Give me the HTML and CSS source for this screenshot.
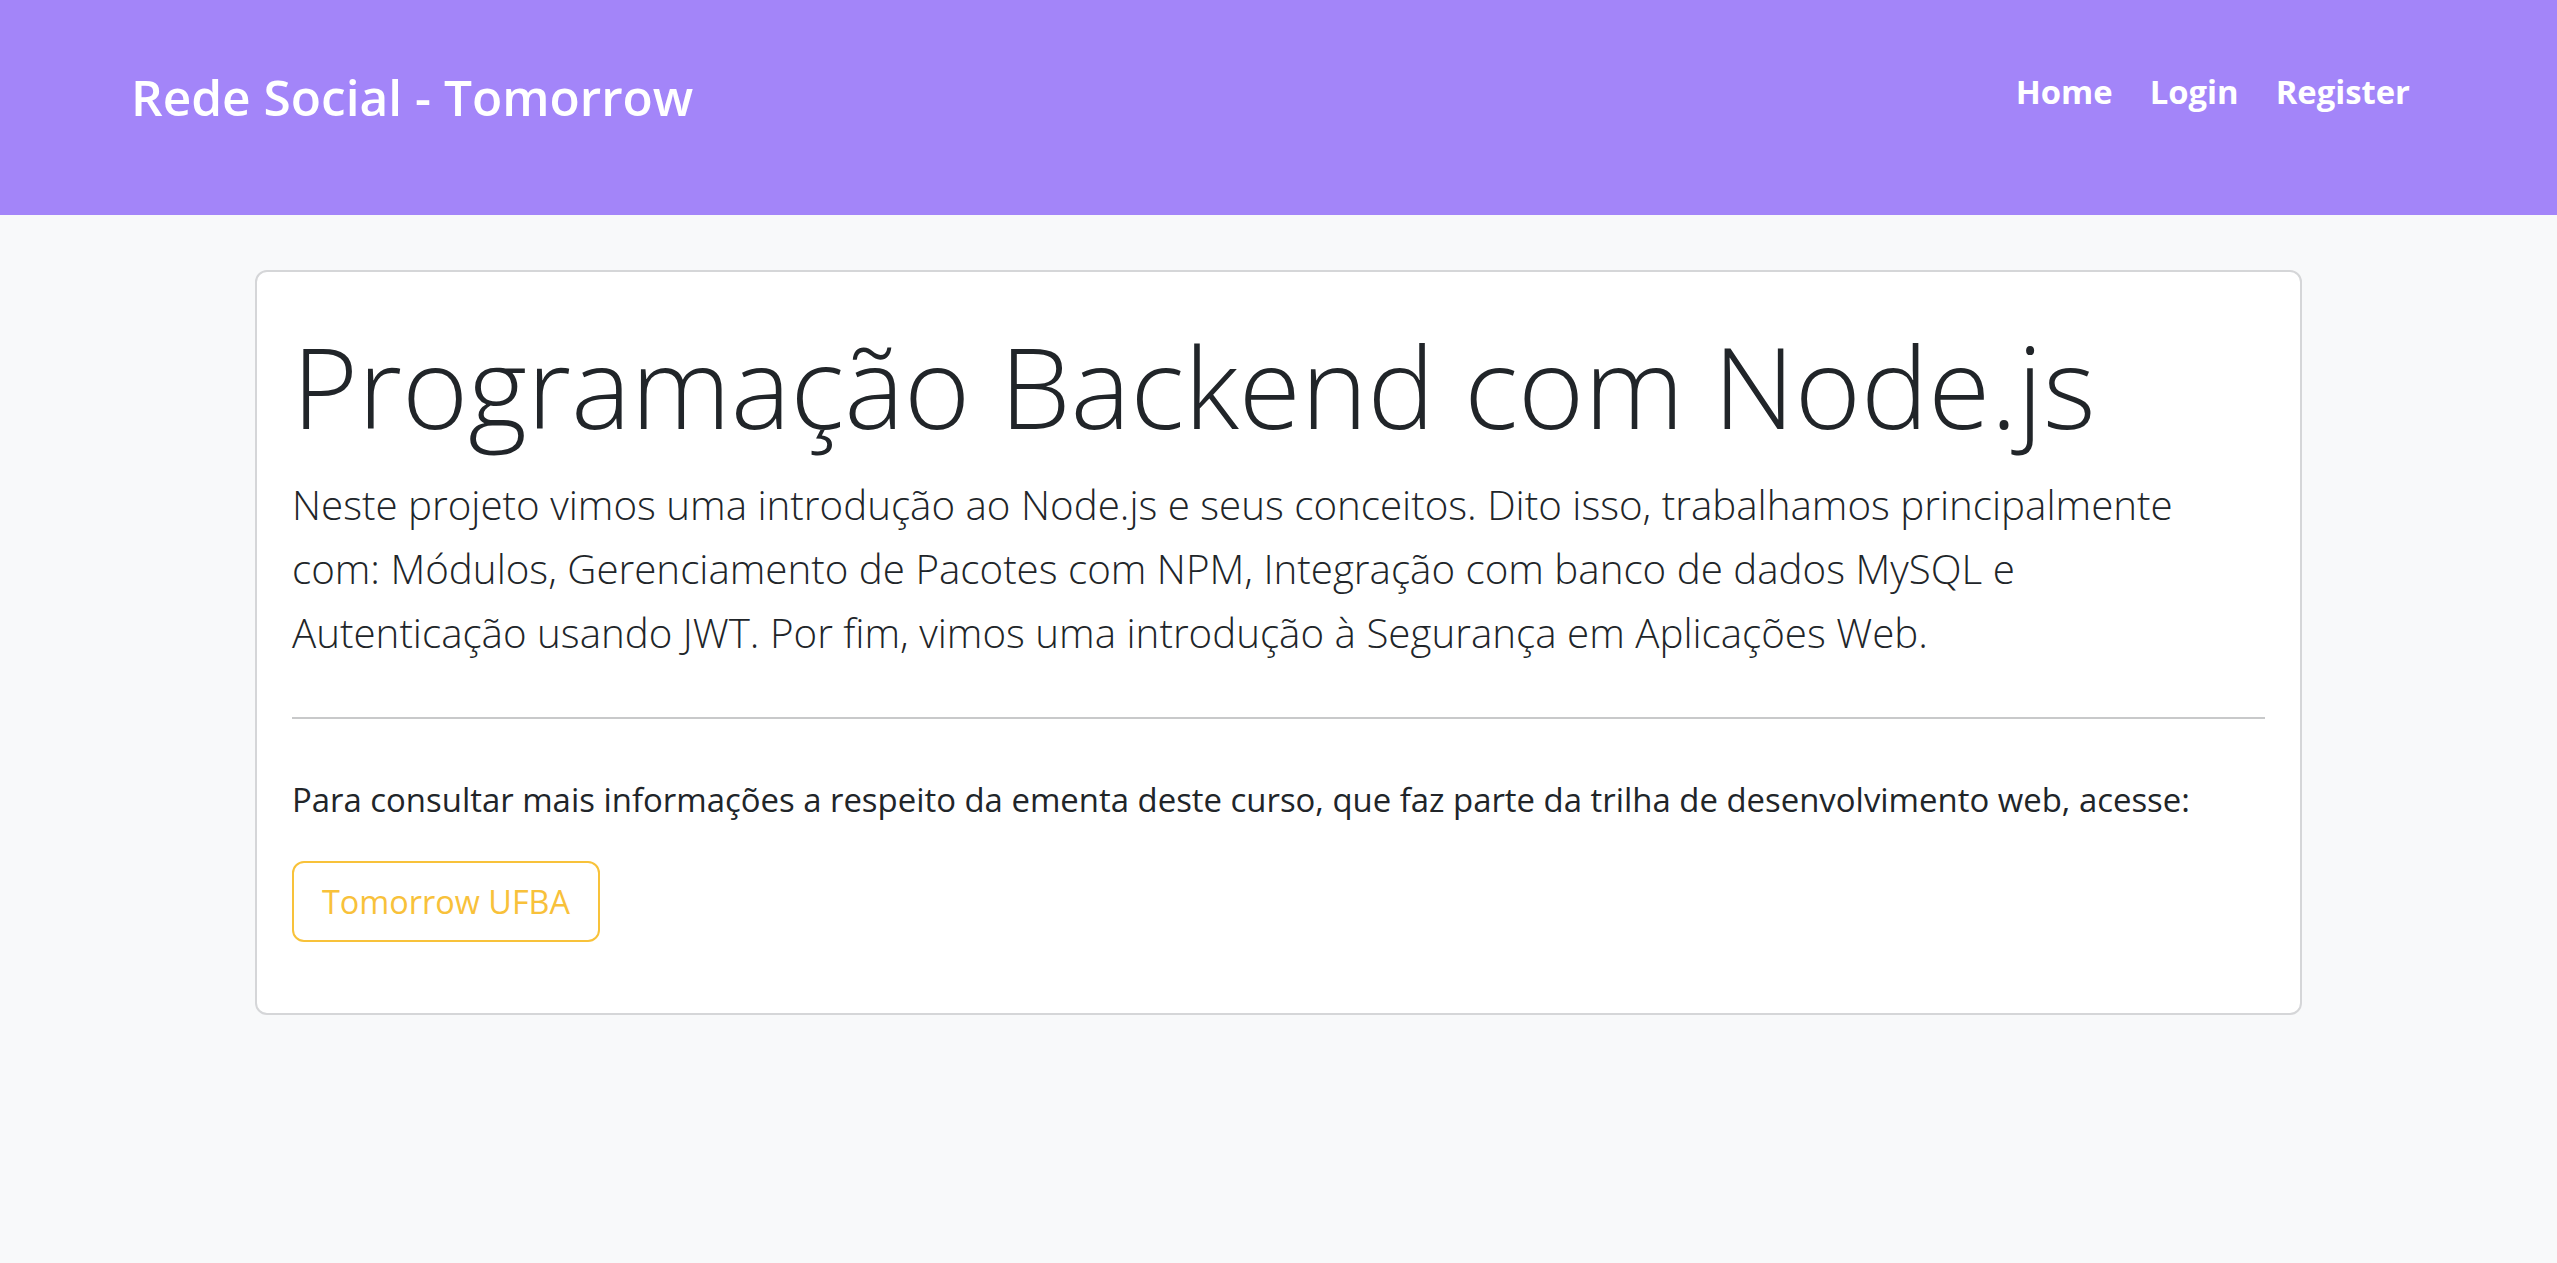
FILE: index.html
```html
<!DOCTYPE html>
<html lang="pt-BR">
<head>
<meta charset="utf-8">
<title>Rede Social - Tomorrow</title>
<link rel="stylesheet" href="styles.css">
</head>
<body>
<header class="navbar">
  <a class="brand" href="#">Rede Social - Tomorrow</a>
  <nav class="nav">
    <a class="nav-link" href="#">Home</a>
    <a class="nav-link" href="#">Login</a>
    <a class="nav-link" href="#">Register</a>
  </nav>
</header>
<main class="main">
  <section class="card">
    <h1 class="display">Programação Backend com Node.js</h1>
    <p class="lead">Neste projeto vimos uma introdução ao Node.js e seus conceitos. Dito isso, trabalhamos principalmente<br>com: Módulos, Gerenciamento de Pacotes com NPM, Integração com banco de dados MySQL e<br>Autenticação usando JWT. Por fim, vimos uma introdução à Segurança em Aplicações Web.</p>
    <hr class="divider">
    <p class="text">Para consultar mais informações a respeito da ementa deste curso, que faz parte da trilha de desenvolvimento web, acesse:</p>
    <a class="btn-outline" href="#">Tomorrow UFBA</a>
  </section>
</main>
</body>
</html>
```

FILE: styles.css
```css
* { box-sizing: border-box; }
html, body { margin: 0; padding: 0; }
body {
  background: #f8f9fa;
  color: #212529;
  font-family: "Open Sans", "Noto Sans", sans-serif;
  min-height: 1263px;
}
a { text-decoration: none; }

.navbar {
  background: #a385f9;
  height: 215px;
  display: flex;
  justify-content: space-between;
  align-items: flex-start;
  padding: 0 147px 0 131px;
}
.brand {
  color: #fff;
  font-weight: 600;
  font-size: 49.6px;
  line-height: 72px;
  margin-top: 61px;
}
.nav {
  display: flex;
  gap: 37px;
  margin-top: 66px;
}
.nav-link {
  color: #fff;
  font-weight: 700;
  font-size: 32.8px;
  line-height: 51px;
}

.main {
  padding-top: 55px;
}
.card {
  width: 2047px;
  margin: 0 auto;
  background: #fff;
  border: 2px solid #d5d6d8;
  border-radius: 12px;
  padding: 46px 35px 71px 35px;
}
.display {
  margin: 0;
  font-weight: 300;
  font-size: 113px;
  line-height: 134px;
}
.lead {
  margin: 21px 0 0 0;
  font-weight: 300;
  font-size: 40.3px;
  line-height: 64px;
}
.divider {
  margin: 52px 0 0 0;
  border: 0;
  border-top: 2px solid #c8c9ca;
  height: 0;
}
.text {
  margin: 57px 0 0 0;
  font-size: 32.9px;
  line-height: 48.75px;
}
.btn-outline {
  display: inline-flex;
  align-items: center;
  margin-top: 36px;
  height: 81px;
  padding: 0 28px;
  border: 2px solid #f8c23a;
  border-radius: 12px;
  color: #f8c13a;
  font-size: 32.4px;
  font-weight: 400;
}
```
